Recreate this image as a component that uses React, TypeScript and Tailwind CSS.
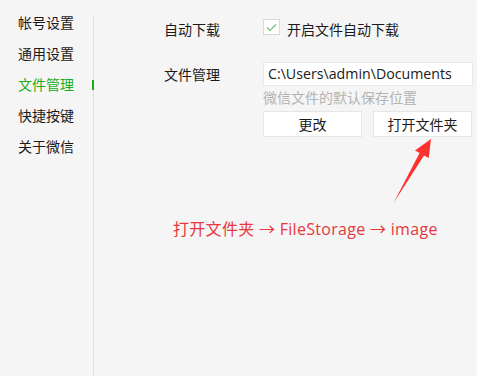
const MENU = ['帐号设置', '通用设置', '文件管理', '快捷按键', '关于微信']

const CJK = { fontFamily: '"Noto Sans CJK SC", "Microsoft YaHei", sans-serif' }
const LATIN = { fontFamily: '"Open Sans", "Noto Sans CJK SC", sans-serif' }

export default function App() {
  const active = '文件管理'

  return (
    <div className="relative flex w-[477px] h-[376px] overflow-hidden bg-[#f5f5f5] text-[#1a1a1a]" style={CJK}>
      {/* Sidebar */}
      <aside className="w-[93px] pt-[7px]">
        {MENU.map(item => (
          <div
            key={item}
            className={`relative h-[31px] pl-[18px] text-[14px] leading-[31px] ${item === active ? 'text-[#1aad19]' : ''}`}
          >
            {item}
            {item === active && (
              <span className="absolute right-[-1px] top-[11px] w-[2px] h-[10px] bg-[#1aad19]" />
            )}
          </div>
        ))}
      </aside>
      <div className="w-px mt-[15px] bg-[#e3e3e3]" />

      {/* Content */}
      <main className="flex-1 pl-[70px] pt-[19px]">
        <div className="flex items-center h-[16px]">
          <span className="w-[99px] text-[14px] leading-[16px] pt-[3px]">自动下载</span>
          <span className="flex items-center justify-center w-[17px] h-[16px] bg-white border border-[#d9d9d9]">
            <svg width="11" height="9" viewBox="0 0 11 9" fill="none">
              <path d="M1 4.5 L4 7.5 L10 1.5" stroke="#6fc173" strokeWidth="1.2" />
            </svg>
          </span>
          <span className="ml-[7px] text-[14px] leading-[16px] pt-[3px]">开启文件自动下载</span>
        </div>

        <div className="flex items-start mt-[27px]">
          <span className="w-[99px] text-[14px] leading-[24px]">文件管理</span>
          <div className="w-[210px]">
            <div className="h-[24px] bg-white border border-[#e8e8e8] pl-[4px] text-[14.2px] leading-[22px]" style={LATIN}>
              C:\Users\admin\Documents
            </div>
            <div className="mt-[1px] text-[14px] leading-[21px] text-[#b3b3b3]">微信文件的默认保存位置</div>
            <div className="flex gap-[11px] mt-[3px]">
              <button className="w-[99px] h-[26px] bg-white border border-[#e6e6e6] text-[14px]">更改</button>
              <button className="w-[99px] h-[26px] bg-white border border-[#e6e6e6] text-[14px]">打开文件夹</button>
            </div>
          </div>
        </div>

        <p className="mt-[80px] ml-[9px] text-[16px] leading-[24px] tracking-[0.3px] text-[#e5393e]" style={LATIN}>
          打开文件夹 → FileStorage → image
        </p>
      </main>

      {/* Annotation arrow */}
      <svg className="absolute inset-0 pointer-events-none" width="477" height="376">
        <polygon
          points="431,139 428.7,158 424,155.6 393.5,203 419.6,153 415,150.5"
          fill="#ff3030"
        />
      </svg>
    </div>
  )
}
